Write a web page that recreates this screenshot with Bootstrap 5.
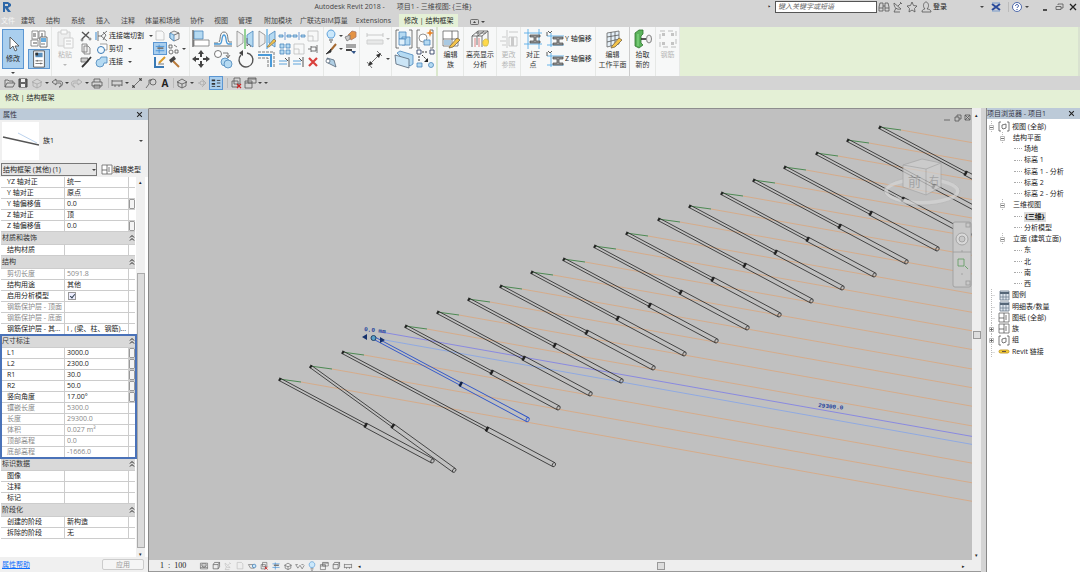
<!DOCTYPE html>
<html lang="zh-CN">
<head>
<meta charset="utf-8">
<meta name="viewport" content="width=device-width, initial-scale=1">
<title>Autodesk Revit 2018</title>
<link href="https://cdn.jsdelivr.net/npm/bootstrap@5.3.0/dist/css/bootstrap.min.css" rel="stylesheet">
<script src="https://cdn.jsdelivr.net/npm/bootstrap@5.3.0/dist/js/bootstrap.bundle.min.js"></script>
<style>
body{font:7px/10px "Open Sans","Noto Sans CJK SC",sans-serif;color:#222;background:#d4d4d4;height:100vh;overflow:hidden}
button,input,select{font:inherit;color:inherit;padding:0;border:0;background:none}
button{display:flex;align-items:center;justify-content:center}
svg{display:block;flex:none}
svg.s{width:14px;height:14px}
svg.b{width:20px;height:20px}
.ln{fill:none;stroke:#555;stroke-width:.8}
.bl{fill:#b5daf2;stroke:#4a86bb;stroke-width:.8}
.car{flex:none;width:6px;height:10px;display:flex;align-items:center;justify-content:center}
.car::before{content:"";border:2px solid transparent;border-top:2px solid #444;border-bottom:0}
.titlebar{height:13px}
.titlebar .caption{margin-left:28%;color:#444;gap:12px;padding-left:0}
.search{width:102px;height:12px;border:1px solid #555;background:#fff;padding-left:2px}
.search::placeholder{font-style:italic;color:#666}
.tabs{height:14px;padding-left:1px}
.tabs li+li{margin-left:11px}
.tabs li.first{margin-left:6px}
.tabs li:nth-child(n+7){margin-left:10px}
.tabs li:nth-child(n+11){margin-left:12px}
.tabs li:nth-child(12){margin-left:8px}
.tabs li:nth-child(13),.tabs li:nth-child(14){margin-left:8px}
.tabs a{color:#444;text-decoration:none;line-height:13px;display:block}
.tabs .file{color:#f4f4f4}
.tabs .on{background:#e4f0d6;padding:0 5px;color:#222}
.ribbon{height:49px;background:#e4f0d6;border-right:2px solid #d9e2d0}
.pane{background:#f7f8f8;border-right:1px solid #e6e8e6;padding-top:2px;flex:none}
.g3{display:grid;grid-template-rows:repeat(3,13px)}
.g2{display:grid;grid-template-rows:repeat(2,20px)}
.col22{grid-template-columns:repeat(4,22px)}
.col14{grid-template-columns:repeat(3,14px)}
.big{flex-direction:column;justify-content:flex-start;color:#333;width:100%;line-height:10px}
.big svg{margin-bottom:1px}
.sel{background:#aacfee;border:1px solid #5b96d2}
.off{opacity:.35}
.qat{height:14px;padding-left:2px}
.qat button{width:14px;height:14px;flex:none}
.vr-s{width:1px;height:10px;background:#bbb;margin:0 1px}
.ctx{height:18px;background:#e4f0d6;padding:3px 5px}
.phead{height:11px;background:#bccad8;color:#334;padding:0 3px;flex:none}
.props{width:149px;background:#f0f0f0;border-right:1px solid #888;border-top:1px solid #d0d4c8;flex:none}
.ptype{height:42px;padding:2px 0}
.thumb{width:37px;height:38px;background:#fff;margin-left:2px}
.typesel{width:96px;height:13px;border:1px solid #777;background:#e6e6e6;appearance:none;padding-left:1px}
.grid{width:134px;table-layout:fixed;border-collapse:separate;border-spacing:0;background:#fff}
.grid td,.grid th{height:11px;line-height:10px;padding:0 0 0 2px;border-bottom:1px solid #ccc;font-weight:400;white-space:nowrap;overflow:hidden}
.grid th{padding-left:6px;border-right:1px solid #ccc}
.grid td:last-child{border-left:1px solid #ccc;padding:0}
.grid .cat th{height:13px;background:#d9d9d9;padding-left:1px;border-right:0;color:#333}
.grid .cat td:last-child{border-left:0;background:#d9d9d9;padding-left:1px}
.ro{color:#888}
.pick{width:6px;height:10px;border:1px solid #999;border-radius:1px;background:#f4f4f4}
.marked{outline:2px solid #4a72b8;outline-offset:-1px;position:relative;width:135px}
.tickbox{appearance:none;width:8px;height:8px;margin:0 0 0 1px;display:block;border:1px solid #999;background:#eef}
.tickbox:checked::before{content:"";display:block;width:3px;height:5px;margin-left:2px;border:solid #345;border-width:0 1px 1px 0;transform:rotate(40deg)}
.pscroll{width:9px;background:#f0f0f0;padding-top:2px}
.pscroll .bar{width:8px;height:275px;border:1px solid #aaa;background:#dcdcdc;margin-top:88px}
.tiny{font-size:5px;line-height:6px}
.apply{width:42px;height:11px;border:1px solid #ccc;border-radius:2px;color:#999;background:#f5f5f5}
.stage{background:#c0c0c0;border-top:1px solid #8e8e8e;min-width:0;min-height:0}
.vbar{width:9px;background:#eee;flex:none;padding:4px 0 2px}
.knob{width:8px;height:8px;border:1px solid #999;background:#ddd}
.status{height:12px;background:#eee;border-bottom:1px solid #999;padding-left:11px;flex:none}
.status svg{width:12px;height:10px}
.scale{font-family:"Liberation Serif","Noto Sans CJK SC",serif;font-size:8px;width:38px;word-spacing:0}
.browser{width:94px;background:#fff;border-left:1px solid #888;flex:none;margin-left:5px}
.tree{padding:2px 0 0;margin:0;list-style:none}
.tree li{height:11px;display:flex;align-items:center;white-space:nowrap}
.tree li:nth-child(4n){height:12px}
.tree svg{width:12px;height:11px;margin-right:2px}
.tree svg.tw{width:7px;height:12px;margin:0 1px;overflow:visible}
.tree li>.ic{margin-left:2px}
.tree .d1{padding-left:11px}.tree .d2{padding-left:27px}
.d2::before{content:"";width:8px;border-top:1px dotted #aaa;margin-right:2px}
.d1 span{margin-left:6px}
.cur{background:#ddd;font-weight:700;padding:0 1px}
</style>
</head>
<body class="d-flex flex-column">
<svg width="0" height="0" class="position-absolute" aria-hidden="true"><defs>
<symbol id="chev" viewBox="0 0 6 8"><path d="M1 3.500l2-2 2 2M1 6.500l2-2 2 2" fill="none" stroke="#222"/></symbol>
<symbol id="cursor" viewBox="0 0 20 20"><path d="M7 3v12l3-3 2 5 2-1-2-4h4z" fill="#fff" stroke="#444" stroke-width=".8"/></symbol>
<symbol id="props2" viewBox="0 0 20 20"><path d="M3 2h6v8H3zM10 2h6v8h-6zM2 11h7v6H2z" fill="#fff" stroke="#777" stroke-width=".8"/><path d="M4 4h3v4H4zM4 13h4v2H4zM12 4h2v4h-2z" fill="#aaa"/><path d="M11 8h7v10h-7z" fill="#fff" stroke="#555" stroke-width=".8"/><path d="M12 9h5v4h-5z" fill="#6aaede"/><path class="ln" d="M12 15h4"/></symbol>
<symbol id="props1" viewBox="0 0 20 20"><path d="M4 1h12v18H4z" fill="#fff" stroke="#444" stroke-width=".9"/><path d="M6 3h8v5H6z" fill="#5b90bd"/><path d="M6 3h3v3H6z" fill="#333"/><path class="ln" d="M6 12h8M6 15h8M8 11v2M12 14v2"/></symbol>
<symbol id="paste" viewBox="0 0 20 20"><path d="M3 3h12v14H3z" fill="#ddd" stroke="#888"/><path d="M6 1h6v4H6zM9 9h9v10H9z" fill="#fff" stroke="#888"/><path class="ln" d="M11 12h5M11 15h5"/></symbol>
<symbol id="cut" viewBox="0 0 14 14"><path d="M3 3l7 6M10 3L3 10" class="ln" style="stroke-width:1.4"/><circle cx="3" cy="11" r="1" class="ln"/><circle cx="11" cy="10" r="1" class="ln"/></symbol>
<symbol id="copy" viewBox="0 0 14 14"><path d="M3 2h5v8H3zM5 4h4l2 2v6H5z" fill="#eee" stroke="#777" stroke-width=".8"/></symbol>
<symbol id="match" viewBox="0 0 14 14"><path d="M2 3h7v4H2z" fill="#ccc" stroke="#666" stroke-width=".8"/><path d="M12 2L7 8l-4 4" stroke="#333" stroke-width="1.800" fill="none"/></symbol>
<symbol id="cope" viewBox="0 0 14 14"><path d="M3 2v10M3 7h3M12 2L6 7l6 5M8 3l3 3-3 5" class="ln"/><path d="M1 3v8" stroke="#3a8ad0"/></symbol>
<symbol id="cutg" viewBox="0 0 14 14"><path d="M5 2h7v6H9" fill="#fff" stroke="#888" stroke-width=".8"/><circle cx="6" cy="8" r="3.500" fill="#eef8ff" stroke="#3a7ab5"/></symbol>
<symbol id="joing" viewBox="0 0 14 14"><path class="bl" d="M6 2h6v6H9a4 4 0 1 1-4-4z"/></symbol>
<symbol id="page" viewBox="0 0 14 14"><path class="ln" d="M3 2h6l2 2v7H3z"/></symbol>
<symbol id="cube" viewBox="0 0 14 14"><path d="M3 4l4-2 5 2v6l-5 2-4-3z" fill="#eee" stroke="#666" stroke-width=".8"/><path d="M3 4l4 2v6l-4-3z" class="bl"/><path class="ln" d="M7 6l5-2"/></symbol>
<symbol id="gcube" viewBox="0 0 14 14"><path d="M3 5h7v6H3zM3 5l2-3h7l-2 3M12 2v6l-2 3" fill="none" stroke="#555" stroke-width=".9"/></symbol>
<symbol id="joint" viewBox="0 0 14 14"><path d="M2 4h10M2 9h10M6 2v10" stroke="#3a8ad5" stroke-width=".9" fill="none"/><path d="M4 5h7v2H4z" fill="#777"/></symbol>
<symbol id="nodes" viewBox="0 0 14 14"><path class="ln" d="M2 3h3v3H2zM8 8h3v3H8zM7 3l3 2"/><circle class="ln" cx="4" cy="10" r="2"/></symbol>
<symbol id="paint" viewBox="0 0 14 14"><path d="M2 2v10h9" stroke="#3a7ab5" stroke-width="2" fill="none"/><path d="M6 8l6-6" stroke="#d99a2b" stroke-width="2"/><path d="M5 9h6" class="ln"/></symbol>
<symbol id="hammer" viewBox="0 0 14 14"><path d="M6 6l6 6" stroke="#b97a3a" stroke-width="2"/><path d="M2 5l5-4 2 3-5 4z" fill="#444"/></symbol>
<symbol id="align" viewBox="0 0 20 20"><path class="bl" d="M3 2h9v8H3z"/><path d="M3 11h15v6H3z" fill="#fff" stroke="#777" stroke-width=".8"/><path d="M2 1v17" stroke="#333"/></symbol>
<symbol id="offset" viewBox="0 0 20 20"><path class="ln" d="M1 17h18M1 14h4M6 13c2-2 0-10 5-10s3 8 5 10h3"/><path d="M1 15h6c3-1 1-9 4-9s1 8 4 9h4" fill="none" stroke="#4a9ad8" stroke-width="1.300"/></symbol>
<symbol id="mirror" viewBox="0 0 20 20"><path d="M2 2l6 4v8l-6 4z" fill="#eee" stroke="#888" stroke-width=".8"/><path d="M18 2l-6 4v8l6 4z" class="bl"/><path d="M10 0v20" stroke="#3a3"/><path d="M12 9v8l2-2 2 3" class="ln" fill="#fff"/></symbol>
<symbol id="mirrord" viewBox="0 0 20 20"><path d="M2 2l6 4v8l-6 4z" fill="#eee" stroke="#888" stroke-width=".8"/><path d="M18 2l-6 4v8l6 4z" class="bl"/><path d="M10 0v20" stroke="#39d"/><path d="M10 18l7-8 2 2-7 6z" fill="#f3c34a" stroke="#875" stroke-width=".8"/></symbol>
<symbol id="move" viewBox="0 0 20 20"><path d="M10 1l3 4h-2v3H9V5H7zM10 19l3-4h-2v-3H9v3H7zM1 10l4-3v2h3v2H5v2zM19 10l-4-3v2h-3v2h3v2z" fill="#444"/></symbol>
<symbol id="copyc" viewBox="0 0 20 20"><circle cx="5" cy="5" r="3.500" fill="#fff" stroke="#555" stroke-width=".8"/><path class="ln" d="M10 4h5v4M13 6l2 3 2-3"/><circle cx="12" cy="13" r="4" class="bl"/><circle cx="15" cy="15" r="4" class="bl"/></symbol>
<symbol id="rot" viewBox="0 0 20 20"><path d="M6 6a7 7 0 1 0 6-2" fill="none" stroke="#555" stroke-width="1.400"/><path d="M8 1v6L4 4z" fill="#444"/></symbol>
<symbol id="trim" viewBox="0 0 20 20"><path d="M1 6h13v12M14 6v3" fill="none" stroke="#4a9ad8" stroke-width="2"/><path class="ln" d="M1 3h16v15M1 9h10v9" stroke-dasharray="3 1"/></symbol>
<symbol id="split" viewBox="0 0 14 14"><path class="bl" d="M1 6h4v2H1zM9 6h4v2H9z"/><path d="M7 3v8" stroke="#58c" stroke-width=".8"/></symbol>
<symbol id="arr" viewBox="0 0 14 14"><path class="bl" d="M2 2h4v4H2zM8 2h4v4H8zM2 8h4v4H2zM8 8h4v4H8z"/></symbol>
<symbol id="scl" viewBox="0 0 14 14"><path class="ln" d="M2 2h10v10H2zM2 7h5v5"/></symbol>
<symbol id="pin" viewBox="0 0 14 14"><path class="ln" d="M2 7h3M5 4v6M5 5h5v4H5M11 3v8"/></symbol>
<symbol id="ext" viewBox="0 0 14 14"><path d="M1 6h8M1 9h8" stroke="#4a9ad8" stroke-width=".9"/><path d="M11 2v10M7 3l3 3" stroke="#555" fill="none"/></symbol>
<symbol id="del" viewBox="0 0 14 14"><path d="M3 3l8 8M11 3l-8 8" stroke="#d9403c" stroke-width="2.200"/></symbol>
<symbol id="bulb" viewBox="0 0 14 14"><path d="M5 9C1 5 4 1 7 1s6 4 2 8z" fill="#cbe8fb" stroke="#3a8ad0" stroke-width=".8"/><path d="M5 11h4M6 13h2" stroke="#555"/></symbol>
<symbol id="disp" viewBox="0 0 14 14"><path d="M4 6l4-4 4 1v5l-5 3z" fill="#e49344" stroke="#a76" stroke-width=".8"/><path d="M1 8l5-2v4l-3 2z" fill="#ccc" stroke="#777" stroke-width=".8"/></symbol>
<symbol id="brush" viewBox="0 0 14 14"><path d="M12 2L7 8" stroke="#a66a32" stroke-width="2"/><path d="M7 7l-5 5 5-2z" fill="#333" stroke="#333" stroke-width=".8"/></symbol>
<symbol id="lines" viewBox="0 0 14 14"><path d="M2 3h10M2 5h10" stroke="#555"/><path d="M2 8h6" stroke="#444" stroke-width="2"/><path d="M7 9h5l-2 3z" fill="#358"/></symbol>
<symbol id="roll" viewBox="0 0 14 14"><path d="M3 3l7 2 2 7-8-4z" fill="#b0cfe4" stroke="#567" stroke-width=".8"/><circle cx="4" cy="6" r="2" fill="#fff" stroke="#567" stroke-width=".8"/></symbol>
<symbol id="dim" viewBox="0 0 20 20"><path class="ln" d="M2 6h16M2 4v4M18 4v4"/><path d="M2 11h16v4H2z" fill="#ccc" stroke="#888"/></symbol>
<symbol id="meas" viewBox="0 0 20 20"><path class="ln" d="M4 16L15 5M2 13l5 6M12 2l5 5"/><path d="M3 17l2-5 3 3zM16 4l-2 5-3-3z" fill="#333"/></symbol>
<symbol id="grp" viewBox="0 0 20 20"><path class="ln" d="M5 1H2v18h3M15 1h3v18h-3"/><path class="bl" d="M5 3h7v7H5zM8 8h8v8H8z"/><path d="M5 10h6v6H5z" fill="#dff0fb" stroke="#4a86bb" stroke-width=".8"/></symbol>
<symbol id="grp2" viewBox="0 0 20 20"><path class="ln" d="M5 1H2v18h3M15 1h3v18h-3"/><circle cx="8" cy="9" r="4" fill="#fff" stroke="#777" stroke-width=".8"/><path class="bl" d="M9 11h6v5H9z"/><path d="M15 0l1 3 3 1-3 1-1 3-1-3-3-1 3-1z" fill="#e8862a"/></symbol>
<symbol id="folder" viewBox="0 0 20 20"><path class="bl" d="M3 4l3-2 13 4v9l-3 2z"/><path d="M1 6l14 4v9L2 15z" fill="#cbe5f6" stroke="#567" stroke-width=".8"/></symbol>
<symbol id="asm" viewBox="0 0 20 20"><path d="M2 1h4v4H2zM15 1h4v4h-4z" fill="#fff" stroke="#346" stroke-width=".9"/><path class="bl" d="M2 14h5v4H2z"/><circle class="bl" cx="16" cy="16" r="2.500"/><path d="M7 3h6M4 7v5M7 6l6 6" stroke="#333" stroke-dasharray="2 1"/><path d="M13 9v4H9z" fill="#222"/></symbol>
<symbol id="editf" viewBox="0 0 20 20"><path d="M2 2h15v15H2z" fill="#fff" stroke="#666" stroke-width=".8"/><path d="M3 11h7v5H3z" fill="#a9c9e2"/><path class="ln" d="M11 2v8H2M11 10h6M11 10v7"/><path d="M9 17l7-8 3 2-7 7-4 1z" fill="#f3c34a" stroke="#764" stroke-width=".8"/></symbol>
<symbol id="hl" viewBox="0 0 20 20"><path class="ln" d="M2 7l6-5h10v11M2 7h10l6-5M2 7v11M12 7v11M7 7v9M6 4h10M8 2v5M14 2L8 7"/><path d="M5 9v9M9 9v9" stroke="#d66" stroke-width=".8"/><path d="M14 17c-3-4 0-7 2-7s4 3 1 7z" fill="#ffd94a" stroke="#cb4" stroke-width=".8"/></symbol>
<symbol id="ref" viewBox="0 0 20 20"><path class="ln" d="M10 3h9M8 1v18M10 8h8v9h-8zM1 12h6M3 8h4M3 16h4"/><path d="M12 8h3v9h-3z" fill="#777"/></symbol>
<symbol id="just" viewBox="0 0 20 20"><path d="M1 4h18M1 15h18M5 0v20M16 0v20" stroke="#58ade8" stroke-width=".9"/><path d="M7 6h10v2h-4v4h4v2H7v-2h4V8H7z" fill="#999" stroke="#444" stroke-width=".7"/></symbol>
<symbol id="yoff" viewBox="0 0 20 20"><path d="M6 4v14M2 7h17M2 16h17" stroke="#58ade8" stroke-width=".9"/><path d="M8 8h10v2h-4v4h4v2H8v-2h4v-4H8z" fill="#999" stroke="#444" stroke-width=".7"/><path d="M3 2l2 2M7 2L5 4M2 3v4" stroke="#333" stroke-width=".8"/></symbol>
<symbol id="wplane" viewBox="0 0 20 20"><path d="M4 4l12-2v13L4 18z" fill="#e5f0f8" stroke="#666" stroke-width=".8"/><path class="ln" d="M8 3v14M12 3v13M4 8l12-2M4 13l12-3"/><path d="M9 17l7-8 3 2-7 7-4 1z" fill="#f3c34a" stroke="#764" stroke-width=".8"/></symbol>
<symbol id="picknew" viewBox="0 0 20 20"><path d="M2 4l4-3h4v4L8 7v7l2 2-4 3-4-2z" fill="#5bb35b" stroke="#2f752f" stroke-width=".8"/><path d="M5 5v12" stroke="#9e9" stroke-width=".8"/><path d="M8 10h5" stroke="#222" stroke-width="1.500"/><ellipse cx="16" cy="10" rx="2.500" ry="4" fill="#eee" stroke="#666" stroke-width=".8"/></symbol>
<symbol id="rebar" viewBox="0 0 20 20"><path d="M2 2h16v16H2z" fill="none" stroke="#555" stroke-dasharray="5 3"/><path d="M4 4h3v3H4zM13 4h3v3h-3zM4 13h3v3H4zM13 13h3v3h-3z" fill="#666"/></symbol>
<symbol id="open" viewBox="0 0 14 14"><path class="ln" d="M3 11V4h3l1 1h4v2M3 11l2-4h8l-2 4z"/></symbol>
<symbol id="save" viewBox="0 0 14 14"><path d="M3 3h8v8H3z" fill="#666" stroke="#444"/><path d="M5 3h4v3H5zM5 8h4v3H5z" fill="#eee"/></symbol>
<symbol id="undo" viewBox="0 0 14 14"><path class="ln" d="M6 3L2 6l4 3V7h4c2 0 1 4-1 4 4 0 5-6 1-6H6z"/></symbol>
<symbol id="redo" viewBox="0 0 14 14"><path class="ln" d="M8 3l4 3-4 3V7H4c-2 0-1 4 1 4-4 0-5-6-1-6h4z"/></symbol>
<symbol id="print" viewBox="0 0 14 14"><path class="ln" d="M4 6V3h6v3M2 6h10v4H2zM4 9h6v3H4z"/></symbol>
<symbol id="sheet" viewBox="0 0 14 14"><path class="ln" d="M2 3h10v8H2zM4 4h6v3H4zM2 9h10M4 7l3 2 3-2"/></symbol>
<symbol id="mdim" viewBox="0 0 14 14"><path class="ln" d="M2 4v6M12 4v6M2 5h10M2 9h10M5 9v2M9 9v2"/></symbol>
<symbol id="diag" viewBox="0 0 14 14"><path class="ln" d="M3 11l8-8M2 9l3 3M9 2l3 3"/><path d="M2 12l1-3 2 2zM12 2l-1 3-2-2z" fill="#333"/></symbol>
<symbol id="tag" viewBox="0 0 14 14"><path class="ln" d="M2 12l3-4M5 8V4h3"/><circle class="ln" cx="9" cy="6" r="3"/></symbol>
<symbol id="house" viewBox="0 0 14 14"><path class="ln" d="M2 6l5-3 5 3-5 2zM3 6v4l4 2 4-2V6M7 8v4"/></symbol>
<symbol id="sect" viewBox="0 0 14 14"><path class="ln" d="M3 7h2M7 3l4 4-4 4"/><circle class="ln" cx="7" cy="7" r="2"/></symbol>
<symbol id="thin" viewBox="0 0 14 14"><path d="M2 3h4v2H2zM2 7h4v2H2z" fill="#333"/><path d="M2 11h4M8 4h4M8 7h4M8 11h4" stroke="#333"/></symbol>
<symbol id="closeh" viewBox="0 0 14 14"><path class="ln" d="M5 2h6v6H5zM3 5h6v6H3z"/><path d="M8 8l4 4M12 8l-4 4" stroke="#c22" stroke-width="1.200"/></symbol>
<symbol id="wins" viewBox="0 0 14 14"><path class="ln" d="M5 2h8v5H5zM2 5h7v7H2zM5 3h8M2 7h7"/></symbol>
<symbol id="vbulb" viewBox="0 0 14 14"><path class="ln" d="M2 5h6l2 5H5z"/><circle cx="10" cy="7" r="2.500" fill="#cbe8fb" stroke="#3a7ab5"/></symbol>
<symbol id="glass" viewBox="0 0 14 14"><path class="ln" d="M1 5l3 5 3-4 3 5 3-5M1 5h3M9 5h3"/></symbol>
<symbol id="bino" viewBox="0 0 14 14"><path class="ln" d="M3 3h3v8H2V7zM8 3h3l1 4v4H8zM6 6h2M2 8h4M8 8h4"/></symbol>
<symbol id="sat" viewBox="0 0 14 14"><path class="ln" d="M3 3c0 5 3 7 7 6zM5 8l-2 4h6M7 6l3-3M9 2l2 2"/></symbol>
<symbol id="star" viewBox="0 0 14 14"><path class="ln" d="M7 2l1.500 3.500L12 6 9.500 8.500 10 12 7 10l-3 2 .5-3.500L2 6l3.500-.5z"/></symbol>
<symbol id="user" viewBox="0 0 14 14"><path class="ln" d="M3 12c0-3 3-3 3-3-3-3-1-7 1-7s4 4 1 7c0 0 4 0 4 3z"/></symbol>
<symbol id="xch" viewBox="0 0 14 14"><path d="M3 4l8 6M11 4l-8 6" stroke="#2a4a9a" stroke-width="2"/><path d="M3 3h8M3 11h8" stroke="#79c"/></symbol>
<symbol id="help" viewBox="0 0 14 14"><circle cx="7" cy="7" r="4.500" fill="#fff" stroke="#2a4a9a" stroke-width=".8"/><path d="M5.500 6c0-2 3-2 3 0 0 1-1.500 1-1.500 2M7 9v1" stroke="#2a4a9a" fill="none"/></symbol>
<symbol id="min" viewBox="0 0 14 14"><path d="M5 10h4" stroke="#222" stroke-width="1.500"/></symbol>
<symbol id="rest" viewBox="0 0 14 14"><path class="ln" d="M6 5V4h5v4H9M4 6.500h5v3H4z"/></symbol>
<symbol id="cls" viewBox="0 0 14 14"><path d="M4 4l6 6M10 4l-6 6" stroke="#222" stroke-width="1.300"/></symbol>
<symbol id="sht" viewBox="0 0 12 11"><path d="M2 1h9v9H2z" fill="#dfe6ee" stroke="#678" stroke-width=".8"/><path d="M2 3h9" stroke="#567" stroke-width="2"/><path d="M2 7h9M5 3v7M8 3v7" stroke="#678" stroke-width=".7"/></symbol>
<symbol id="vw" viewBox="0 0 12 11"><path class="ln" d="M3 1H1v9h2M9 1h2v9H9M4 7V4l4-1v4l-3 1z"/></symbol>
<symbol id="fam" viewBox="0 0 12 11"><path d="M1 1h10v9H1z" fill="#fff" stroke="#666" stroke-width=".8"/><path class="ln" d="M1 6h5V1M6 6v4M8 3v5"/></symbol>
<symbol id="lnk" viewBox="0 0 12 11"><rect x="1" y="4" width="10" height="3" rx="1.500" fill="#f6cf3f" stroke="#b88a10" stroke-width=".8"/><path d="M4 5.500h4" stroke="#654"/></symbol>
<symbol id="tm" viewBox="0 0 7 12"><path d="M3.500 0v12" stroke="#bbb" stroke-dasharray="1 1"/><path d="M1.500 4.500h4v4h-4z" fill="#fff" stroke="#aaa" stroke-width=".8"/><path d="M2 6.500h3" stroke="#555" stroke-width=".8"/></symbol>
<symbol id="tp" viewBox="0 0 7 12"><path d="M3.500 0v12" stroke="#bbb" stroke-dasharray="1 1"/><path d="M1.500 4.500h4v4h-4z" fill="#fff" stroke="#aaa" stroke-width=".8"/><path d="M2 6.500h3M3.500 5v3" stroke="#555" stroke-width=".8"/></symbol>
<symbol id="tl" viewBox="0 0 7 12"><path d="M3.500 0v12M3.500 6.500H7" stroke="#bbb" stroke-dasharray="1 1"/></symbol>
</defs></svg>

<header class="titlebar d-flex align-items-center flex-shrink-0">
  <svg width="12" height="12" viewBox="0 0 12 12"><path d="M3 1h5l3 2v2L8 7l3 4H8L5 7v4H3z" fill="#2d67a8"/><path d="M5 3h3v2H5z" fill="#d4d4d4"/></svg>
  <div class="caption d-flex"><span>Autodesk Revit 2018 -</span><span>项目1 - 三维视图: {三维}</span></div>
  <div class="d-flex align-items-center ms-auto">
    <span class="me-1">‣</span><input class="search" type="text" aria-label="搜索" placeholder="键入关键字或短语">
    <button aria-label="查找"><svg class="s"><use href="#bino"/></svg></button><button aria-label="通讯"><svg class="s"><use href="#sat"/></svg></button><button aria-label="收藏"><svg class="s"><use href="#star"/></svg></button>
    <button class="pe-4"><svg class="s"><use href="#user"/></svg>登录</button>
    <i class="car ms-2"></i><button class="mx-1" aria-label="交换"><svg class="s"><use href="#xch"/></svg></button><i class="vr-s"></i><button aria-label="帮助"><svg class="s"><use href="#help"/></svg></button><i class="car me-2"></i>
    <button aria-label="最小化"><svg class="s"><use href="#min"/></svg></button><button aria-label="还原"><svg class="s"><use href="#rest"/></svg></button><button aria-label="关闭"><svg class="s"><use href="#cls"/></svg></button>
  </div>
</header>

<nav class="flex-shrink-0"><ul class="tabs list-unstyled d-flex m-0 align-items-end text-nowrap">
<li><a class="file" href="#">文件</a></li><li class="first"><a href="#">建筑</a></li><li><a href="#">结构</a></li><li><a href="#">系统</a></li><li><a href="#">插入</a></li><li><a href="#">注释</a></li><li><a href="#">体量和场地</a></li><li><a href="#">协作</a></li><li><a href="#">视图</a></li><li><a href="#">管理</a></li><li><a href="#">附加模块</a></li><li><a href="#">广联达BIM算量</a></li><li><a href="#">Extensions</a></li><li><a class="on" href="#">修改 | 结构框架</a></li>
<li class="d-flex align-items-center"><svg width="10" height="10" viewBox="0 0 10 10"><rect class="ln" x=".5" y="2.500" width="8" height="5" rx="1"/><path d="M3 6l1.500-2L6 6z" fill="#444"/></svg><i class="car"></i></li>
</ul></nav>

<section class="ribbon d-flex flex-shrink-0">
  <div class="pane d-flex" style="width:52px;padding-left:2px">
    <div style="width:22px"><button class="sel flex-column w-100" style="height:40px"><svg class="b"><use href="#cursor"/></svg>修改</button><i class="car mx-auto" style="height:7px"></i></div>
    <div class="g2 ms-1" style="width:22px"><button aria-label="类型属性"><svg class="b"><use href="#props2"/></svg></button><button class="sel" aria-label="属性"><svg width="18" height="18"><use href="#props1"/></svg></button></div>
  </div>
  <div class="pane d-flex" style="width:138px">
    <button class="big off" style="width:26px"><svg class="b"><use href="#paste"/></svg>粘贴<i class="car"></i></button>
    <div class="g3" style="width:15px"><button aria-label="剪切"><svg class="s"><use href="#cut"/></svg></button><button aria-label="复制"><svg class="s"><use href="#copy"/></svg></button><button aria-label="匹配"><svg class="s"><use href="#match"/></svg></button></div>
    <div class="g3 text-nowrap" style="width:60px;justify-items:start;padding-left:2px"><button><svg class="s"><use href="#cope"/></svg>连接端切割<i class="car ms-1"></i></button><button><svg class="s"><use href="#cutg"/></svg>剪切<i class="car ms-1"></i></button><button><svg class="s"><use href="#joing"/></svg>连接<i class="car ms-1"></i></button></div>
    <div class="g3" style="grid-template-columns:14px 20px"><button class="off"><svg class="s"><use href="#page"/></svg></button><button class="justify-content-start"><svg class="s"><use href="#cube"/></svg></button><button class="sel"><svg width="12" height="12"><use href="#joint"/></svg></button><button class="justify-content-start"><svg class="s"><use href="#nodes"/></svg><i class="car"></i></button><button><svg class="s"><use href="#paint"/></svg></button><button class="justify-content-start"><svg class="s"><use href="#hammer"/></svg></button></div>
  </div>
  <div class="pane d-flex" style="width:134px">
    <div class="g2 col22"><button><svg class="b"><use href="#align"/></svg></button><button><svg class="b"><use href="#offset"/></svg></button><button><svg class="b"><use href="#mirror"/></svg></button><button><svg class="b"><use href="#mirrord"/></svg></button><button><svg class="b"><use href="#move"/></svg></button><button><svg class="b"><use href="#copyc"/></svg></button><button><svg class="b"><use href="#rot"/></svg></button><button><svg class="b"><use href="#trim"/></svg></button></div>
    <div class="g3 col14"><button><svg class="s"><use href="#split"/></svg></button><button><svg class="s"><use href="#split"/></svg></button><button class="off"><svg class="s"><use href="#scl"/></svg></button><button><svg class="s"><use href="#arr"/></svg></button><button class="off"><svg class="s"><use href="#scl"/></svg></button><button><svg class="s"><use href="#pin"/></svg></button><button><svg class="s"><use href="#ext"/></svg></button><button><svg class="s"><use href="#ext"/></svg></button><button><svg class="s"><use href="#del"/></svg></button></div>
  </div>
  <div class="pane g3" style="width:36px;grid-template-columns:20px 14px"><button><svg class="s"><use href="#bulb"/></svg><i class="car"></i></button><button><svg class="s"><use href="#disp"/></svg></button><button><svg class="s"><use href="#brush"/></svg><i class="car"></i></button><button><svg class="s"><use href="#lines"/></svg></button><button class="justify-content-start"><svg class="s"><use href="#roll"/></svg></button></div>
  <div class="pane g2" style="width:32px;padding-left:4px"><button class="off"><svg class="b"><use href="#dim"/></svg><i class="car"></i></button><button><svg class="b"><use href="#meas"/></svg><i class="car"></i></button></div>
  <div class="pane g2" style="width:46px;padding-left:2px;grid-template-columns:20px 20px;border-right:2px solid #dbe8cd;column-gap:1px"><button><svg class="b"><use href="#grp"/></svg></button><button><svg class="b"><use href="#grp2"/></svg></button><button><svg class="b"><use href="#folder"/></svg></button><button><svg class="b"><use href="#asm"/></svg></button></div>
  <div class="pane" style="width:26px"><button class="big"><svg class="b"><use href="#editf"/></svg>编辑<br>族</button></div>
  <div class="pane" style="width:33px"><button class="big text-nowrap"><svg class="b"><use href="#hl"/></svg>高亮显示<br>分析</button></div>
  <div class="pane" style="width:24px"><button class="big off"><svg class="b"><use href="#ref"/></svg>更改<br>参照</button></div>
  <div class="pane d-flex" style="width:75px">
    <button class="big" style="width:24px"><svg class="b"><use href="#just"/></svg>对正<br>点</button>
    <div class="g2 text-nowrap"><button><svg class="b"><use href="#yoff"/></svg>Y 轴偏移</button><button><svg class="b"><use href="#yoff"/></svg>Z 轴偏移</button></div>
  </div>
  <div class="pane" style="width:34px;border-color:#ccc"><button class="big text-nowrap"><svg class="b"><use href="#wplane"/></svg>编辑<br>工作平面</button></div>
  <div class="pane" style="width:26px"><button class="big"><svg class="b"><use href="#picknew"/></svg>拾取<br>新的</button></div>
  <div class="pane" style="width:24px"><button class="big off"><svg class="b"><use href="#rebar"/></svg>钢筋</button></div>
</section>

<div class="qat d-flex align-items-center flex-shrink-0">
<button aria-label="打开"><svg class="s"><use href="#open"/></svg></button><button aria-label="保存"><svg class="s"><use href="#save"/></svg></button><button class="off"><svg class="s"><use href="#house"/></svg></button><i class="car"></i><button><svg class="s"><use href="#undo"/></svg></button><i class="car"></i><button class="off"><svg class="s"><use href="#redo"/></svg></button><i class="car"></i><button><svg class="s"><use href="#print"/></svg></button><i class="vr-s ms-1"></i><button><svg class="s"><use href="#mdim"/></svg></button><i class="car"></i><button><svg class="s"><use href="#diag"/></svg></button><button><svg class="s"><use href="#tag"/></svg></button><button class="fw-bold" style="font-size:10px">A</button><i class="vr-s"></i><button><svg class="s"><use href="#house"/></svg></button><i class="car"></i><button class="off"><svg class="s"><use href="#sect"/></svg></button><button class="sel"><svg width="12" height="12"><use href="#thin"/></svg></button><i class="vr-s ms-1"></i><button><svg class="s"><use href="#closeh"/></svg></button><button><svg class="s"><use href="#wins"/></svg></button><i class="car"></i><i class="car"></i>
</div>
<div class="ctx flex-shrink-0">修改 | 结构框架</div>

<main class="d-flex flex-grow-1" style="min-height:0">
<aside class="props d-flex flex-column">
  <div class="phead d-flex justify-content-between align-items-center">属性<button aria-label="关闭"><svg width="11" height="11"><use href="#cls"/></svg></button></div>
  <div class="ptype d-flex align-items-center"><div class="thumb"><svg width="37" height="38"><path d="M1 15l36 8" stroke="#555" stroke-width="1.500"/><path d="M16 11l19 10" stroke="#bcd3ee"/></svg></div><span class="ms-1">族1</span><i class="car ms-auto me-1"></i></div>
  <div class="d-flex align-items-center" style="padding:1px 0 1px 1px"><div class="position-relative"><select class="typesel d-block" aria-label="类型"><option>结构框架 (其他) (1)</option></select><i class="car position-absolute end-0 top-0 bottom-0 my-auto"></i></div><button class="ms-1"><svg width="12" height="11"><use href="#fam"/></svg>编辑类型</button></div>
  <div class="d-flex flex-grow-1" style="min-height:0;padding-left:1px;background:#fff">
  <div style="width:135px">
  <table class="grid"><colgroup><col style="width:64px"><col style="width:63px"><col></colgroup>
  <tr><th>YZ 轴对正</th><td>统一</td><td></td></tr><tr><th>Y 轴对正</th><td>原点</td><td></td></tr><tr><th>Y 轴偏移值</th><td>0.0</td><td><button class="pick" aria-label="关联"></button></td></tr><tr><th>Z 轴对正</th><td>顶</td><td></td></tr><tr><th>Z 轴偏移值</th><td>0.0</td><td><button class="pick" aria-label="关联"></button></td></tr>
  <tr class="cat"><th colspan="2">材质和装饰</th><td><svg width="6" height="8"><use href="#chev"/></svg></td></tr><tr><th>结构材质</th><td></td><td></td></tr>
  <tr class="cat"><th colspan="2">结构</th><td><svg width="6" height="8"><use href="#chev"/></svg></td></tr><tr class="ro"><th>剪切长度</th><td>5091.8</td><td></td></tr><tr><th>结构用途</th><td>其他</td><td></td></tr><tr><th><label class="d-block" for="an">启用分析模型</label></th><td><input id="an" class="tickbox" type="checkbox" checked></td><td></td></tr><tr class="ro"><th>钢筋保护层 - 顶面</th><td></td><td></td></tr><tr class="ro"><th>钢筋保护层 - 底面</th><td></td><td></td></tr><tr><th>钢筋保护层 - 其...</th><td>I , (梁、柱、钢筋)...</td><td></td></tr></table>
  <table class="grid marked"><colgroup><col style="width:64px"><col style="width:63px"><col></colgroup>
  <tr class="cat"><th colspan="2">尺寸标注</th><td><svg width="6" height="8"><use href="#chev"/></svg></td></tr><tr><th>L1</th><td>3000.0</td><td><button class="pick" aria-label="关联"></button></td></tr><tr><th>L2</th><td>2300.0</td><td><button class="pick" aria-label="关联"></button></td></tr><tr><th>R1</th><td>30.0</td><td><button class="pick" aria-label="关联"></button></td></tr><tr><th>R2</th><td>50.0</td><td><button class="pick" aria-label="关联"></button></td></tr><tr><th>竖向角度</th><td>17.00°</td><td><button class="pick" aria-label="关联"></button></td></tr><tr class="ro"><th>镶嵌长度</th><td>5300.0</td><td></td></tr><tr class="ro"><th>长度</th><td>29300.0</td><td></td></tr><tr class="ro"><th>体积</th><td>0.027 m³</td><td></td></tr><tr class="ro"><th>顶部高程</th><td>0.0</td><td></td></tr><tr class="ro"><th>底部高程</th><td>-1666.0</td><td></td></tr></table>
  <table class="grid"><colgroup><col style="width:64px"><col style="width:63px"><col></colgroup>
  <tr class="cat"><th colspan="2">标识数据</th><td><svg width="6" height="8"><use href="#chev"/></svg></td></tr><tr><th>图像</th><td></td><td></td></tr><tr><th>注释</th><td></td><td></td></tr><tr><th>标记</th><td></td><td></td></tr><tr class="cat"><th colspan="2">阶段化</th><td><svg width="6" height="8"><use href="#chev"/></svg></td></tr><tr><th>创建的阶段</th><td>新构造</td><td></td></tr><tr><th>拆除的阶段</th><td>无</td><td></td></tr></table>
  </div>
  <div class="pscroll d-flex flex-column align-items-center"><span class="tiny">▴</span><div class="bar flex-shrink-0"></div><span class="tiny mt-auto">▾</span></div>
  </div>
  <div class="d-flex justify-content-between align-items-center" style="height:15px;padding:0 4px 0 2px"><a href="#">属性帮助</a><button class="apply">应用</button></div>
</aside>

<section class="d-flex flex-column flex-grow-1" style="min-width:0">
  <div class="d-flex flex-grow-1" style="min-height:0">
  <div class="stage flex-grow-1"><svg width="100%" height="100%" role="img" aria-label="三维视图"><defs>
    <g id="beam" fill="none" stroke="#333" stroke-width=".8"><g transform="rotate(28.1)"><path d="M0-1.300H98M0 1.300H98M98-2.200h76M98 2.200h76"/><ellipse cx="174" cy="0" rx="1.500" ry="2.200"/><path d="M97-2.500h2.500v5H97zM0-1.500h2v3H0z" fill="#222" stroke="none"/></g></g>
    <g id="rail" fill="none" stroke-width=".8"><path d="M0 0l22 3" stroke="#2d7a35"/><path d="M22 3l675 120" stroke="#dba67c"/></g></defs>
    <g transform="translate(-149 -109)">
    <use href="#rail" x="279" y="379"/><use href="#rail" x="310" y="366"/><use href="#rail" x="342" y="352"/><use href="#rail" x="405" y="326"/><use href="#rail" x="437" y="312"/><use href="#rail" x="468" y="299"/><use href="#rail" x="500" y="286"/><use href="#rail" x="531" y="272"/><use href="#rail" x="563" y="259"/><use href="#rail" x="594" y="246"/><use href="#rail" x="626" y="233"/><use href="#rail" x="658" y="219"/><use href="#rail" x="689" y="206"/><use href="#rail" x="721" y="193"/><use href="#rail" x="753" y="180"/><use href="#rail" x="784" y="167"/><use href="#rail" x="816" y="153"/><use href="#rail" x="847" y="140"/><use href="#rail" x="879" y="127"/>
    <path d="M381 332l600 106" stroke="#7b7be8" stroke-width=".8"/><path d="M385 340l596 106" stroke="#83a3ea" stroke-width=".8"/>
    <use href="#beam" x="279" y="379"/><use href="#beam" x="405" y="326"/><use href="#beam" x="437" y="312"/><use href="#beam" x="468" y="299"/><use href="#beam" x="500" y="286"/><use href="#beam" x="531" y="272"/><use href="#beam" x="563" y="259"/><use href="#beam" x="594" y="246"/><use href="#beam" x="626" y="233"/><use href="#beam" x="658" y="219"/><use href="#beam" x="689" y="206"/><use href="#beam" x="721" y="193"/><use href="#beam" x="753" y="180"/><use href="#beam" x="784" y="167"/><use href="#beam" x="816" y="153"/><use href="#beam" x="847" y="140"/><use href="#beam" x="879" y="127"/>
    <g fill="none" stroke="#333" stroke-width=".8"><g transform="translate(310 366) rotate(35.900)"><path d="M0-1.300H102M0 1.300H102M102-2.200h76M102 2.200h76"/><ellipse cx="178" cy="0" rx="1.500" ry="2.200"/><path d="M101-2.500h2.500v5H101zM0-1.500h2v3H0z" fill="#222" stroke="none"/></g>
    <g transform="translate(342 352) rotate(28)"><path d="M0-1.300H164M0 1.300H164M164-2.200h76M164 2.200h76"/><ellipse cx="240" cy="0" rx="1.500" ry="2.200"/><path d="M163-2.500h2.500v5H163zM0-1.500h2v3H0z" fill="#222" stroke="none"/></g></g>
    <g fill="none" stroke="#2f55c8" stroke-width=".9"><g transform="translate(374 338) rotate(28)"><path d="M0-1.300H98M0 1.300H98M98-2.200h76M98 2.200h76"/><ellipse cx="174" cy="0" rx="1.500" ry="2.200"/><path d="M97-2.500h2.500v5H97z" fill="#124" stroke="none"/></g></g>
    <path d="M367 334v6l-5-3zM380 337v6l5-3z" fill="#15306b"/><circle cx="373.500" cy="338" r="2.500" fill="#5aa0c8" stroke="#246"/>
    <g fill="#1c3f9c" font-family="Liberation Mono, monospace" font-weight="700" font-size="6"><text transform="translate(364 331) rotate(6)">0.0 mm</text><text transform="translate(818 407) rotate(6)">29300.0</text></g>
    <g fill="none" stroke="#555" stroke-width=".8"><path d="M944 120h6M955 117h4v4h-4zM957 117v-2h4v4h-2M965 115l5 5M970 115l-5 5M965 115h5v5h-5z"/></g>
    <g opacity=".7"><ellipse cx="922" cy="191" rx="36" ry="12" fill="none" stroke="#d6d6d6" stroke-width="4"/><ellipse cx="922" cy="191" rx="38" ry="14" fill="none" stroke="#aaa" stroke-width=".6"/><path d="M903 165l19-6 19 4v24l-15 8-23-8z" fill="#d0d0d0" stroke="#a0a0a0" stroke-width=".8"/><path d="M903 165l23 4 15-6M926 169v26" fill="none" stroke="#a0a0a0" stroke-width=".8"/><text x="908" y="186" font-size="13" fill="#999">前</text><text x="929" y="184" font-size="10" fill="#999">右</text></g>
    <g fill="#c8c8c8" stroke="#999" stroke-width=".8"><rect x="953" y="222" width="18" height="65" rx="2"/><path d="M953 252h18" fill="none"/><circle cx="962" cy="239" r="6" fill="#d8d8d8"/><circle cx="962" cy="239" r="3"/><rect x="966" y="223" width="4" height="4"/><rect x="966" y="281" width="4" height="4"/><path d="M958 259h6v7h-6zM965 266l3 3" stroke="#5a9a5a"/><path d="M961 251h2M961 274h2"/></g>
    </g></svg></div>
  <div class="vbar d-flex flex-column align-items-center justify-content-between"><span class="tiny">▴</span><div class="knob"></div><span class="tiny">▾</span></div>
  </div>
  <div class="status d-flex align-items-center"><span class="scale text-nowrap">1 &nbsp;: &nbsp;100</span>
  <svg><use href="#sheet"/></svg><svg><use href="#gcube"/></svg><svg class="off"><use href="#sat"/></svg><svg class="off"><use href="#page"/></svg><svg><use href="#vbulb"/></svg><svg><use href="#closeh"/></svg><svg><use href="#joint"/></svg><svg><use href="#house"/></svg><svg><use href="#glass"/></svg><svg><use href="#bulb"/></svg><svg><use href="#wins"/></svg><svg><use href="#gcube"/></svg><svg><use href="#mdim"/></svg><span class="tiny ms-1">◂</span><div class="knob" style="margin-left:36%"></div><span class="tiny ms-auto me-3">▸</span></div>
</section>

<aside class="browser">
  <div class="phead d-flex justify-content-between align-items-center text-nowrap ps-0">项目浏览器 - 项目1<button aria-label="关闭"><svg width="11" height="11"><use href="#cls"/></svg></button></div>
  <ul class="tree">
  <li><svg class="tw"><use href="#tm"/></svg><svg class="ic"><use href="#vw"/></svg>视图 (全部)</li>
  <li class="d1"><svg class="tw"><use href="#tm"/></svg><span>结构平面</span></li><li class="d2">场地</li><li class="d2">标高 1</li><li class="d2">标高 1 - 分析</li><li class="d2">标高 2</li><li class="d2">标高 2 - 分析</li>
  <li class="d1"><svg class="tw"><use href="#tm"/></svg><span>三维视图</span></li><li class="d2"><span class="cur">{三维}</span></li><li class="d2">分析模型</li>
  <li class="d1"><svg class="tw"><use href="#tm"/></svg><span>立面 (建筑立面)</span></li><li class="d2">东</li><li class="d2">北</li><li class="d2">南</li><li class="d2">西</li>
  <li><svg class="tw"><use href="#tl"/></svg><svg class="ic"><use href="#sht"/></svg>图例</li><li><svg class="tw"><use href="#tl"/></svg><svg class="ic"><use href="#sht"/></svg>明细表/数量</li><li><svg class="tw"><use href="#tl"/></svg><svg class="ic"><use href="#fam"/></svg>图纸 (全部)</li>
  <li><svg class="tw"><use href="#tp"/></svg><svg class="ic"><use href="#fam"/></svg>族</li><li><svg class="tw"><use href="#tp"/></svg><svg class="ic"><use href="#vw"/></svg>组</li><li><svg class="tw"><use href="#tl"/></svg><svg class="ic"><use href="#lnk"/></svg>Revit 链接</li>
  </ul>
</aside>
</main>
</body>
</html>
